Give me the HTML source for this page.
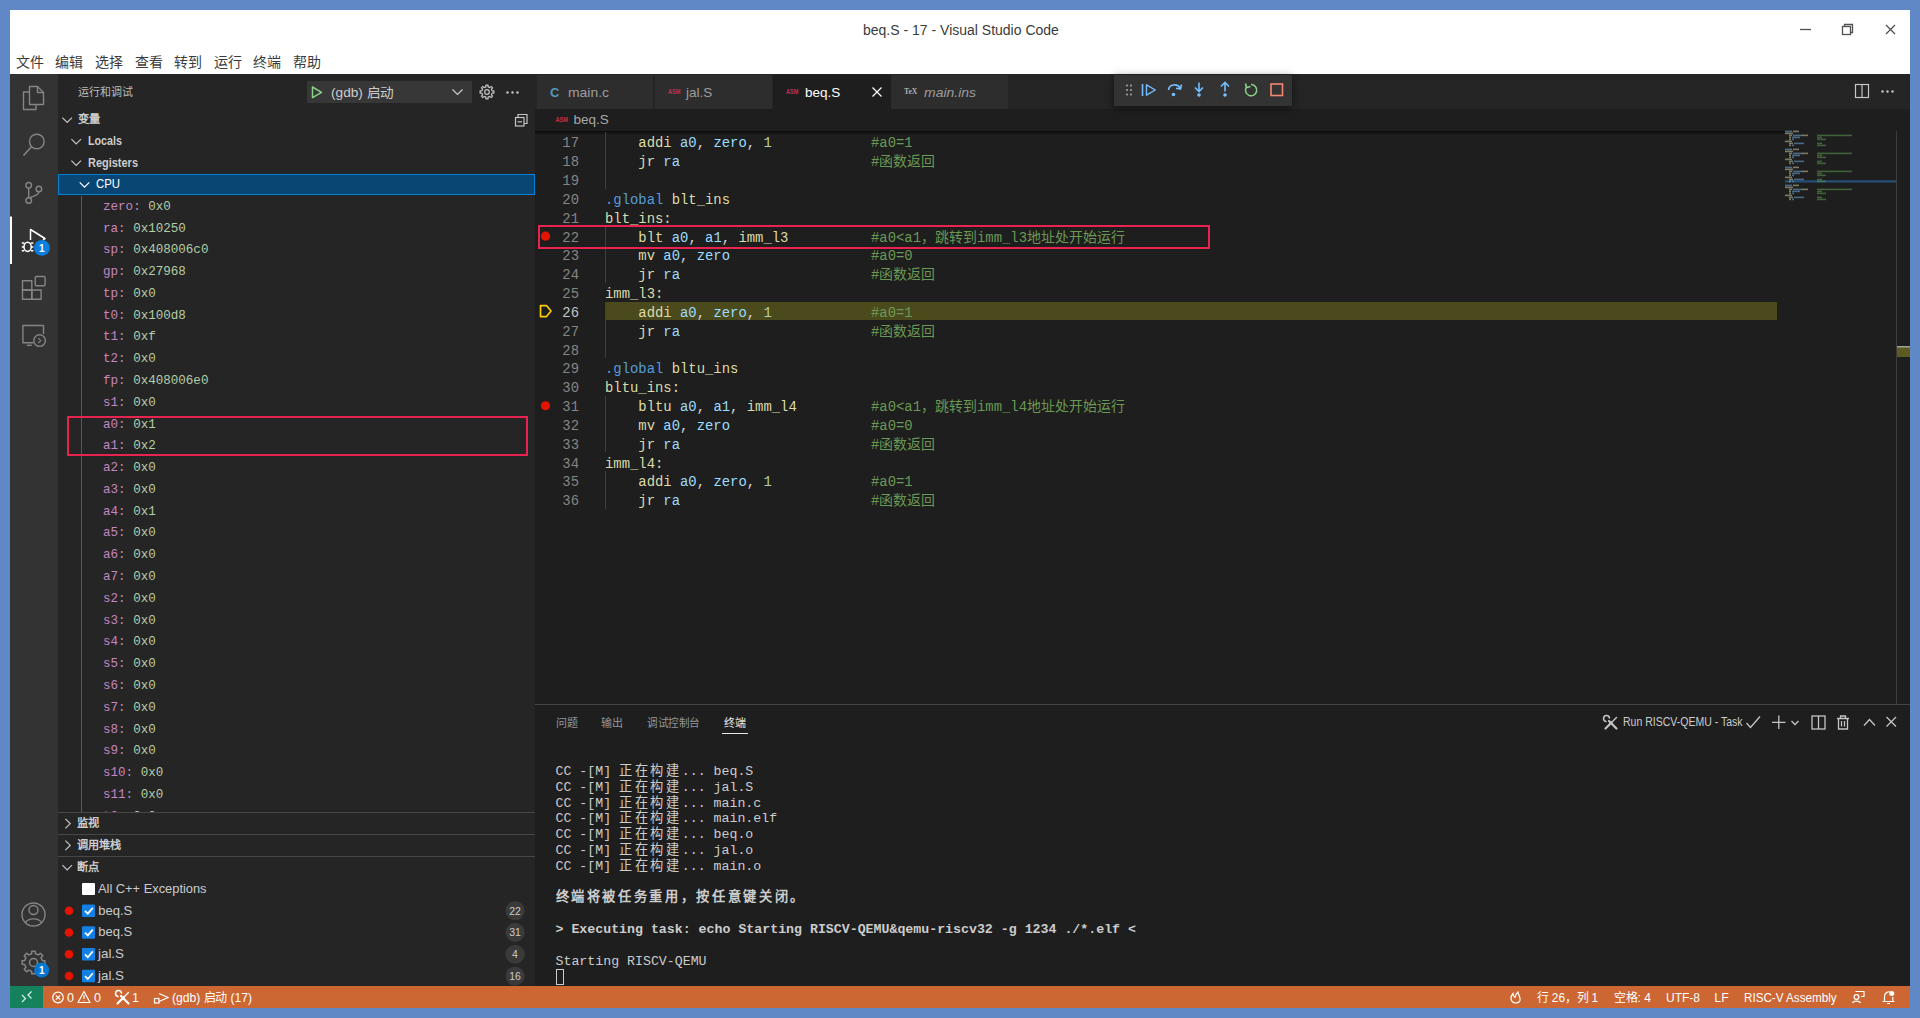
<!DOCTYPE html>
<html lang="zh-CN"><head><meta charset="utf-8">
<style>
*{box-sizing:border-box;margin:0;padding:0}
html,body{width:1920px;height:1018px;overflow:hidden;background:#6088c6}
body{position:relative;font-family:"Liberation Sans",sans-serif}
.a{position:absolute}
.t{position:absolute;white-space:pre}
svg{position:absolute;overflow:visible}
</style></head><body>

<div class="a" style="left:10px;top:10px;width:1900px;height:64px;background:#ffffff;"></div>
<div class="t" style="left:863px;top:20.00px;font-size:14px;color:#3b3b3b;line-height:20px;height:20px;">beq.S - 17 - Visual Studio Code</div>
<div class="t" style="left:15.5px;top:52.00px;font-size:14px;color:#3c3c3c;line-height:20px;height:20px;">文件</div>
<div class="t" style="left:55.3px;top:52.00px;font-size:14px;color:#3c3c3c;line-height:20px;height:20px;">编辑</div>
<div class="t" style="left:95.1px;top:52.00px;font-size:14px;color:#3c3c3c;line-height:20px;height:20px;">选择</div>
<div class="t" style="left:134.5px;top:52.00px;font-size:14px;color:#3c3c3c;line-height:20px;height:20px;">查看</div>
<div class="t" style="left:173.5px;top:52.00px;font-size:14px;color:#3c3c3c;line-height:20px;height:20px;">转到</div>
<div class="t" style="left:214.0px;top:52.00px;font-size:14px;color:#3c3c3c;line-height:20px;height:20px;">运行</div>
<div class="t" style="left:253.0px;top:52.00px;font-size:14px;color:#3c3c3c;line-height:20px;height:20px;">终端</div>
<div class="t" style="left:292.5px;top:52.00px;font-size:14px;color:#3c3c3c;line-height:20px;height:20px;">帮助</div>
<svg style="left:0px;top:0px" width="1920" height="1018" viewBox="0 0 1920 1018">
 <line x1="1800" y1="29.5" x2="1811" y2="29.5" stroke="#505050" stroke-width="1.3"/>
 <rect x="1842.5" y="26.5" width="8" height="8" fill="none" stroke="#505050" stroke-width="1.3"/>
 <path d="M1844.5 26.5 V24.5 H1852.5 V32.5 H1850.5" fill="none" stroke="#505050" stroke-width="1.3"/>
 <path d="M1886 25 L1895 34 M1895 25 L1886 34" stroke="#505050" stroke-width="1.3"/>
</svg>
<div class="a" style="left:10px;top:74px;width:48px;height:912px;background:#333333;"></div>
<div class="a" style="left:58px;top:74px;width:477px;height:912px;background:#252526;"></div>
<div class="a" style="left:535px;top:74px;width:1375px;height:912px;background:#1e1e1e;"></div>
<div class="a" style="left:535px;top:74px;width:1375px;height:34.5px;background:#252526;"></div>
<div class="a" style="left:10px;top:986px;width:1900px;height:22px;background:#cc6633;"></div>
<div class="a" style="left:10px;top:986px;width:33px;height:22px;background:#16825d;"></div>
<svg style="left:10px;top:74px" width="48" height="912" viewBox="10 74 48 912">
<g fill="none" stroke="#858585" stroke-width="1.4" stroke-linejoin="round">
 <path d="M29.5 86.5 H37.5 L43.5 92.5 V104.5 H29.5 Z"/>
 <path d="M37.5 86.5 V92.5 H43.5"/>
 <path d="M29.5 92 H23.5 V109.5 H36 V104.5"/>
 <circle cx="36.8" cy="141.5" r="7.3"/>
 <path d="M31.5 146.8 L23.5 155.5" stroke-width="1.6"/>
 <circle cx="28.7" cy="185.3" r="2.8"/>
 <circle cx="38.9" cy="189" r="2.8"/>
 <circle cx="28.7" cy="200.5" r="2.8"/>
 <path d="M28.7 188.1 V197.7 M38.9 191.8 C38.9 196 33 195.5 29.5 198"/>
 <rect x="22.5" y="280.8" width="9.3" height="9.2"/>
 <rect x="22.5" y="290" width="9.3" height="9.2"/>
 <rect x="31.8" y="290" width="9.3" height="9.2"/>
 <rect x="35.3" y="276.5" width="9.8" height="9.2" rx="1"/>
 <path d="M33.5 342.7 H22.9 V325.5 H43.5 V334"/>
 <path d="M26.8 345.3 H31.8"/>
 <circle cx="39.6" cy="340.6" r="5.8"/>
 <path d="M38.3 338.2 L40.8 340.6 L38.3 343" stroke-width="1.1"/>
 <circle cx="33.5" cy="914.5" r="11.5"/>
 <circle cx="33.5" cy="910" r="4.5"/>
 <path d="M25.5 923 C27.5 917.5 39.5 917.5 41.5 923"/>
</g>
<g fill="none" stroke="#ffffff" stroke-width="1.5" stroke-linejoin="round">
 <path d="M30.5 240 V229.5 L45 238.5 L43 239.8"/>
 <ellipse cx="27.6" cy="246.8" rx="3.6" ry="4.6"/>
 <path d="M21.8 243 H24.2 M21.8 247 H24 M21.8 250.8 H24.2 M31 243 H33.4 M31.2 247 H33.4 M31 250.8 H33.4"/>
</g>
<circle cx="41.9" cy="247.9" r="7.9" fill="#0a7fe0"/>
<text x="41.9" y="251.6" font-family="Liberation Sans" font-size="10" font-weight="bold" fill="#fff" text-anchor="middle">1</text>
<rect x="10" y="216.5" width="2" height="47.5" fill="#ffffff"/>
<g fill="none" stroke="#858585" stroke-width="1.5">
 <circle cx="33.5" cy="962.5" r="4"/>
 <path d="M42.29 960.57 L44.87 960.79 L44.87 964.21 L42.29 964.43 L41.08 967.35 L42.75 969.33 L40.33 971.75 L38.35 970.08 L35.43 971.29 L35.21 973.87 L31.79 973.87 L31.57 971.29 L28.65 970.08 L26.67 971.75 L24.25 969.33 L25.92 967.35 L24.71 964.43 L22.13 964.21 L22.13 960.79 L24.71 960.57 L25.92 957.65 L24.25 955.67 L26.67 953.25 L28.65 954.92 L31.57 953.71 L31.79 951.13 L35.21 951.13 L35.43 953.71 L38.35 954.92 L40.33 953.25 L42.75 955.67 L41.08 957.65 Z" stroke-linejoin="round"/>
</g>
<circle cx="41.7" cy="970" r="7.5" fill="#0078d4"/>
<text x="41.7" y="973.8" font-family="Liberation Sans" font-size="10" font-weight="bold" fill="#fff" text-anchor="middle">1</text>
</svg>
<div class="t" style="left:77.5px;top:82.00px;font-size:11px;color:#bbbbbb;line-height:20px;height:20px;">运行和调试</div>
<div class="a" style="left:306.5px;top:81px;width:165px;height:22px;background:#373737;"></div>
<svg style="left:300px;top:78px" width="235" height="60" viewBox="300 78 235 60">
<path d="M312.5 87 L321.5 92.3 L312.5 97.6 Z" fill="none" stroke="#89d185" stroke-width="1.5" stroke-linejoin="round"/>
<path d="M452.5 89.5 L457.5 94.5 L462.5 89.5" fill="none" stroke="#cccccc" stroke-width="1.2"/>
<g fill="none" stroke="#c5c5c5" stroke-width="1.2" stroke-linejoin="round">
 <path d="M492.08 90.89 L493.92 90.96 L493.92 93.04 L492.08 93.11 L491.38 94.80 L492.63 96.16 L491.16 97.63 L489.80 96.38 L488.11 97.08 L488.04 98.92 L485.96 98.92 L485.89 97.08 L484.20 96.38 L482.84 97.63 L481.37 96.16 L482.62 94.80 L481.92 93.11 L480.08 93.04 L480.08 90.96 L481.92 90.89 L482.62 89.20 L481.37 87.84 L482.84 86.37 L484.20 87.62 L485.89 86.92 L485.96 85.08 L488.04 85.08 L488.11 86.92 L489.80 87.62 L491.16 86.37 L492.63 87.84 L491.38 89.20 Z"/>
 <circle cx="487" cy="92" r="2.3"/>
</g>
<g fill="#c5c5c5"><circle cx="507.5" cy="92.5" r="1.2"/><circle cx="512.5" cy="92.5" r="1.2"/><circle cx="517.5" cy="92.5" r="1.2"/></g>
<g fill="none" stroke="#c5c5c5" stroke-width="1.2">
 <rect x="515.5" y="117.5" width="8.5" height="8.5"/>
 <path d="M518 117.5 V114.5 H527 V123.5 H524"/>
 <path d="M517.5 121.8 H522"/>
</g>
</svg>
<div class="t" style="left:330.5px;top:82.50px;font-size:13px;color:#cccccc;line-height:20px;height:20px;transform:scaleX(1.051);transform-origin:0 50%;">(gdb) 启动</div>
<div class="t" style="left:77.8px;top:109.20px;font-size:11px;color:#cccccc;line-height:20px;height:20px;font-weight:bold;transform:scaleX(1.023);transform-origin:0 50%;">变量</div>
<div class="t" style="left:87.8px;top:131.20px;font-size:12.3px;color:#cccccc;line-height:20px;height:20px;font-weight:bold;transform:scaleX(0.872);transform-origin:0 50%;">Locals</div>
<div class="t" style="left:87.8px;top:152.80px;font-size:12.3px;color:#cccccc;line-height:20px;height:20px;font-weight:bold;transform:scaleX(0.892);transform-origin:0 50%;">Registers</div>
<svg style="left:58px;top:100px" width="40" height="80" viewBox="58 100 40 80"><path d="M62.400000000000006 117.6 L67.2 122.4 L72.0 117.6" fill="none" stroke="#c5c5c5" stroke-width="1.2"/><path d="M71.4 139.1 L76.2 143.9 L81.0 139.1" fill="none" stroke="#c5c5c5" stroke-width="1.2"/><path d="M71.4 160.6 L76.2 165.4 L81.0 160.6" fill="none" stroke="#c5c5c5" stroke-width="1.2"/></svg>
<div class="a" style="left:58px;top:173.6px;width:477px;height:21.8px;background:#0a4674;border:1px solid #007fd4"></div>
<svg style="left:70px;top:170px" width="30" height="30" viewBox="70 170 30 30"><path d="M79.7 182.4 L84.5 187.20000000000002 L89.3 182.4" fill="none" stroke="#ffffff" stroke-width="1.2"/></svg>
<div class="t" style="left:95.5px;top:174.30px;font-size:12.3px;color:#ffffff;line-height:20px;height:20px;transform:scaleX(0.924);transform-origin:0 50%;">CPU</div>
<div class="a" style="left:58px;top:196px;width:477px;height:616.5px;overflow:hidden"><div class="t" style="left:45px;top:0.78px;line-height:20px;font-family:&quot;Liberation Mono&quot;,monospace;font-size:12.55px"><span style="color:#c586c0">zero</span><span style="color:#b48ab2">: </span><span style="color:#b5cea8">0x0</span></div><div class="t" style="left:45px;top:22.56px;line-height:20px;font-family:&quot;Liberation Mono&quot;,monospace;font-size:12.55px"><span style="color:#c586c0">ra</span><span style="color:#b48ab2">: </span><span style="color:#b5cea8">0x10250</span></div><div class="t" style="left:45px;top:44.34px;line-height:20px;font-family:&quot;Liberation Mono&quot;,monospace;font-size:12.55px"><span style="color:#c586c0">sp</span><span style="color:#b48ab2">: </span><span style="color:#b5cea8">0x408006c0</span></div><div class="t" style="left:45px;top:66.12px;line-height:20px;font-family:&quot;Liberation Mono&quot;,monospace;font-size:12.55px"><span style="color:#c586c0">gp</span><span style="color:#b48ab2">: </span><span style="color:#b5cea8">0x27968</span></div><div class="t" style="left:45px;top:87.90px;line-height:20px;font-family:&quot;Liberation Mono&quot;,monospace;font-size:12.55px"><span style="color:#c586c0">tp</span><span style="color:#b48ab2">: </span><span style="color:#b5cea8">0x0</span></div><div class="t" style="left:45px;top:109.68px;line-height:20px;font-family:&quot;Liberation Mono&quot;,monospace;font-size:12.55px"><span style="color:#c586c0">t0</span><span style="color:#b48ab2">: </span><span style="color:#b5cea8">0x100d8</span></div><div class="t" style="left:45px;top:131.46px;line-height:20px;font-family:&quot;Liberation Mono&quot;,monospace;font-size:12.55px"><span style="color:#c586c0">t1</span><span style="color:#b48ab2">: </span><span style="color:#b5cea8">0xf</span></div><div class="t" style="left:45px;top:153.24px;line-height:20px;font-family:&quot;Liberation Mono&quot;,monospace;font-size:12.55px"><span style="color:#c586c0">t2</span><span style="color:#b48ab2">: </span><span style="color:#b5cea8">0x0</span></div><div class="t" style="left:45px;top:175.02px;line-height:20px;font-family:&quot;Liberation Mono&quot;,monospace;font-size:12.55px"><span style="color:#c586c0">fp</span><span style="color:#b48ab2">: </span><span style="color:#b5cea8">0x408006e0</span></div><div class="t" style="left:45px;top:196.80px;line-height:20px;font-family:&quot;Liberation Mono&quot;,monospace;font-size:12.55px"><span style="color:#c586c0">s1</span><span style="color:#b48ab2">: </span><span style="color:#b5cea8">0x0</span></div><div class="t" style="left:45px;top:218.58px;line-height:20px;font-family:&quot;Liberation Mono&quot;,monospace;font-size:12.55px"><span style="color:#c586c0">a0</span><span style="color:#b48ab2">: </span><span style="color:#b5cea8">0x1</span></div><div class="t" style="left:45px;top:240.36px;line-height:20px;font-family:&quot;Liberation Mono&quot;,monospace;font-size:12.55px"><span style="color:#c586c0">a1</span><span style="color:#b48ab2">: </span><span style="color:#b5cea8">0x2</span></div><div class="t" style="left:45px;top:262.14px;line-height:20px;font-family:&quot;Liberation Mono&quot;,monospace;font-size:12.55px"><span style="color:#c586c0">a2</span><span style="color:#b48ab2">: </span><span style="color:#b5cea8">0x0</span></div><div class="t" style="left:45px;top:283.92px;line-height:20px;font-family:&quot;Liberation Mono&quot;,monospace;font-size:12.55px"><span style="color:#c586c0">a3</span><span style="color:#b48ab2">: </span><span style="color:#b5cea8">0x0</span></div><div class="t" style="left:45px;top:305.70px;line-height:20px;font-family:&quot;Liberation Mono&quot;,monospace;font-size:12.55px"><span style="color:#c586c0">a4</span><span style="color:#b48ab2">: </span><span style="color:#b5cea8">0x1</span></div><div class="t" style="left:45px;top:327.48px;line-height:20px;font-family:&quot;Liberation Mono&quot;,monospace;font-size:12.55px"><span style="color:#c586c0">a5</span><span style="color:#b48ab2">: </span><span style="color:#b5cea8">0x0</span></div><div class="t" style="left:45px;top:349.26px;line-height:20px;font-family:&quot;Liberation Mono&quot;,monospace;font-size:12.55px"><span style="color:#c586c0">a6</span><span style="color:#b48ab2">: </span><span style="color:#b5cea8">0x0</span></div><div class="t" style="left:45px;top:371.04px;line-height:20px;font-family:&quot;Liberation Mono&quot;,monospace;font-size:12.55px"><span style="color:#c586c0">a7</span><span style="color:#b48ab2">: </span><span style="color:#b5cea8">0x0</span></div><div class="t" style="left:45px;top:392.82px;line-height:20px;font-family:&quot;Liberation Mono&quot;,monospace;font-size:12.55px"><span style="color:#c586c0">s2</span><span style="color:#b48ab2">: </span><span style="color:#b5cea8">0x0</span></div><div class="t" style="left:45px;top:414.60px;line-height:20px;font-family:&quot;Liberation Mono&quot;,monospace;font-size:12.55px"><span style="color:#c586c0">s3</span><span style="color:#b48ab2">: </span><span style="color:#b5cea8">0x0</span></div><div class="t" style="left:45px;top:436.38px;line-height:20px;font-family:&quot;Liberation Mono&quot;,monospace;font-size:12.55px"><span style="color:#c586c0">s4</span><span style="color:#b48ab2">: </span><span style="color:#b5cea8">0x0</span></div><div class="t" style="left:45px;top:458.16px;line-height:20px;font-family:&quot;Liberation Mono&quot;,monospace;font-size:12.55px"><span style="color:#c586c0">s5</span><span style="color:#b48ab2">: </span><span style="color:#b5cea8">0x0</span></div><div class="t" style="left:45px;top:479.94px;line-height:20px;font-family:&quot;Liberation Mono&quot;,monospace;font-size:12.55px"><span style="color:#c586c0">s6</span><span style="color:#b48ab2">: </span><span style="color:#b5cea8">0x0</span></div><div class="t" style="left:45px;top:501.72px;line-height:20px;font-family:&quot;Liberation Mono&quot;,monospace;font-size:12.55px"><span style="color:#c586c0">s7</span><span style="color:#b48ab2">: </span><span style="color:#b5cea8">0x0</span></div><div class="t" style="left:45px;top:523.50px;line-height:20px;font-family:&quot;Liberation Mono&quot;,monospace;font-size:12.55px"><span style="color:#c586c0">s8</span><span style="color:#b48ab2">: </span><span style="color:#b5cea8">0x0</span></div><div class="t" style="left:45px;top:545.28px;line-height:20px;font-family:&quot;Liberation Mono&quot;,monospace;font-size:12.55px"><span style="color:#c586c0">s9</span><span style="color:#b48ab2">: </span><span style="color:#b5cea8">0x0</span></div><div class="t" style="left:45px;top:567.06px;line-height:20px;font-family:&quot;Liberation Mono&quot;,monospace;font-size:12.55px"><span style="color:#c586c0">s10</span><span style="color:#b48ab2">: </span><span style="color:#b5cea8">0x0</span></div><div class="t" style="left:45px;top:588.84px;line-height:20px;font-family:&quot;Liberation Mono&quot;,monospace;font-size:12.55px"><span style="color:#c586c0">s11</span><span style="color:#b48ab2">: </span><span style="color:#b5cea8">0x0</span></div><div class="t" style="left:45px;top:610.62px;line-height:20px;font-family:&quot;Liberation Mono&quot;,monospace;font-size:12.55px"><span style="color:#c586c0">t3</span><span style="color:#b48ab2">: </span><span style="color:#b5cea8">0x0</span></div><div class="a" style="left:23px;top:0;width:1px;height:620px;background:#585858"></div></div>
<div class="a" style="left:58px;top:812px;width:477px;height:1px;background:#474747;"></div>
<div class="a" style="left:58px;top:834px;width:477px;height:1px;background:#474747;"></div>
<div class="a" style="left:58px;top:856px;width:477px;height:1px;background:#474747;"></div>
<svg style="left:58px;top:810px" width="30" height="70" viewBox="58 810 30 70"><path d="M65.39999999999999 818.8000000000001 L70.2 823.6 L65.39999999999999 828.4" fill="none" stroke="#c5c5c5" stroke-width="1.2"/><path d="M65.39999999999999 840.6 L70.2 845.4 L65.39999999999999 850.1999999999999" fill="none" stroke="#c5c5c5" stroke-width="1.2"/><path d="M62.400000000000006 865.1 L67.2 869.9 L72.0 865.1" fill="none" stroke="#c5c5c5" stroke-width="1.2"/></svg>
<div class="t" style="left:76.7px;top:813.40px;font-size:11px;color:#cccccc;line-height:20px;height:20px;font-weight:bold;transform:scaleX(1.023);transform-origin:0 50%;">监视</div>
<div class="t" style="left:76.7px;top:835.20px;font-size:11px;color:#cccccc;line-height:20px;height:20px;font-weight:bold;transform:scaleX(1.011);transform-origin:0 50%;">调用堆栈</div>
<div class="t" style="left:76.7px;top:857.00px;font-size:11px;color:#cccccc;line-height:20px;height:20px;font-weight:bold;transform:scaleX(1.023);transform-origin:0 50%;">断点</div>
<div class="a" style="left:82px;top:882.5px;width:13px;height:12.3px;background:#ffffff;border-radius:1px"></div>
<div class="t" style="left:98.3px;top:878.90px;font-size:13px;color:#cccccc;line-height:20px;height:20px;transform:scaleX(0.988);transform-origin:0 50%;">All C++ Exceptions</div>
<div class="t" style="left:98.3px;top:900.68px;font-size:13px;color:#cccccc;line-height:20px;height:20px;">beq.S</div>
<div class="t" style="left:98.3px;top:922.46px;font-size:13px;color:#cccccc;line-height:20px;height:20px;">beq.S</div>
<div class="t" style="left:98.3px;top:944.24px;font-size:13px;color:#cccccc;line-height:20px;height:20px;transform:scaleX(1.028);transform-origin:0 50%;">jal.S</div>
<div class="t" style="left:98.3px;top:966.02px;font-size:13px;color:#cccccc;line-height:20px;height:20px;transform:scaleX(1.028);transform-origin:0 50%;">jal.S</div>
<svg style="left:58px;top:890px" width="477" height="96" viewBox="58 890 477 96"><circle cx="69" cy="910.68" r="4.3" fill="#e51400"/><rect x="82" y="904.48" width="13" height="12.4" rx="1" fill="#1380e5"/><path d="M85 910.88 L87.8 913.68 L92.8 907.88" fill="none" stroke="#ffffff" stroke-width="1.8"/><circle cx="515.1" cy="910.68" r="9.6" fill="#3a3a3a"/><circle cx="69" cy="932.46" r="4.3" fill="#e51400"/><rect x="82" y="926.26" width="13" height="12.4" rx="1" fill="#1380e5"/><path d="M85 932.66 L87.8 935.46 L92.8 929.66" fill="none" stroke="#ffffff" stroke-width="1.8"/><circle cx="515.1" cy="932.46" r="9.6" fill="#3a3a3a"/><circle cx="69" cy="954.24" r="4.3" fill="#e51400"/><rect x="82" y="948.04" width="13" height="12.4" rx="1" fill="#1380e5"/><path d="M85 954.44 L87.8 957.24 L92.8 951.44" fill="none" stroke="#ffffff" stroke-width="1.8"/><circle cx="515.1" cy="954.24" r="9.6" fill="#3a3a3a"/><circle cx="69" cy="976.02" r="4.3" fill="#e51400"/><rect x="82" y="969.82" width="13" height="12.4" rx="1" fill="#1380e5"/><path d="M85 976.22 L87.8 979.02 L92.8 973.22" fill="none" stroke="#ffffff" stroke-width="1.8"/><circle cx="515.1" cy="976.02" r="9.6" fill="#3a3a3a"/></svg>
<div class="t" style="left:495px;width:40px;text-align:center;top:900.68px;line-height:20px;font-size:10.5px;color:#cccccc">22</div>
<div class="t" style="left:495px;width:40px;text-align:center;top:922.46px;line-height:20px;font-size:10.5px;color:#cccccc">31</div>
<div class="t" style="left:495px;width:40px;text-align:center;top:944.24px;line-height:20px;font-size:10.5px;color:#cccccc">4</div>
<div class="t" style="left:495px;width:40px;text-align:center;top:966.02px;line-height:20px;font-size:10.5px;color:#cccccc">16</div>
<div class="a" style="left:537px;top:74.5px;width:116px;height:34px;background:#2d2d2d;"></div>
<div class="a" style="left:655px;top:74.5px;width:117px;height:34px;background:#2d2d2d;"></div>
<div class="a" style="left:773px;top:74.5px;width:118px;height:34px;background:#1e1e1e;"></div>
<div class="a" style="left:891px;top:74.5px;width:117px;height:34px;background:#2d2d2d;"></div>
<svg style="left:535px;top:74px" width="500" height="40" viewBox="535 74 500 40">
<text x="550" y="96.5" font-family="Liberation Sans" font-size="13" font-weight="bold" fill="#519aba">C</text>
<text x="668" y="94.2" font-family="Liberation Sans" font-size="7" font-weight="bold" fill="#c7304a" transform="translate(668 0) scale(0.8 1) translate(-668 0)">ASM</text>
<text x="786" y="94.2" font-family="Liberation Sans" font-size="7" font-weight="bold" fill="#c7304a" transform="translate(786 0) scale(0.8 1) translate(-786 0)">ASM</text>
<path d="M872.5 87.5 L881.5 96.5 M881.5 87.5 L872.5 96.5" stroke="#ffffff" stroke-width="1.2"/>
<text x="904" y="94.5" font-family="Liberation Serif" font-size="9" font-weight="bold" fill="#b0b0b0" transform="translate(904 0) scale(0.85 1) translate(-904 0)">TeX</text>
</svg>
<div class="t" style="left:567.5px;top:82.50px;font-size:13.5px;color:#9d9d9d;line-height:20px;height:20px;transform:scaleX(1.031);transform-origin:0 50%;">main.c</div>
<div class="t" style="left:686px;top:82.50px;font-size:13.5px;color:#9d9d9d;line-height:20px;height:20px;">jal.S</div>
<div class="t" style="left:805px;top:82.50px;font-size:13.5px;color:#ffffff;line-height:20px;height:20px;">beq.S</div>
<div class="t" style="left:924.4px;top:82.50px;font-size:13.5px;color:#9d9d9d;line-height:20px;height:20px;font-style:italic;transform:scaleX(1.034);transform-origin:0 50%;">main.ins</div>
<div class="a" style="left:1114px;top:74.5px;width:177.5px;height:31px;background:#333333;box-shadow:0 2px 8px rgba(0,0,0,0.55)"></div>
<svg style="left:1100px;top:74px" width="810" height="40" viewBox="1100 74 810 40">
<g fill="#a0a0a0">
 <circle cx="1127" cy="85.5" r="1.1"/><circle cx="1131" cy="85.5" r="1.1"/>
 <circle cx="1127" cy="90" r="1.1"/><circle cx="1131" cy="90" r="1.1"/>
 <circle cx="1127" cy="94.5" r="1.1"/><circle cx="1131" cy="94.5" r="1.1"/>
</g>
<path d="M1142.5 84 V96" stroke="#75beff" stroke-width="1.6"/>
<path d="M1146.5 84.8 L1155.3 90 L1146.5 95.2 Z" fill="none" stroke="#75beff" stroke-width="1.4" stroke-linejoin="round"/>
<path d="M1168.5 90 C1169 84 1178 83 1180 88.5" fill="none" stroke="#75beff" stroke-width="1.6"/>
<path d="M1176 88.3 L1180.5 89 L1181.5 84.5" fill="none" stroke="#75beff" stroke-width="1.6"/>
<circle cx="1173.5" cy="94.5" r="1.8" fill="#75beff"/>
<path d="M1199 82.5 V91 M1195 87.5 L1199 91.5 L1203 87.5" fill="none" stroke="#75beff" stroke-width="1.6"/>
<circle cx="1199" cy="95" r="1.8" fill="#75beff"/>
<path d="M1225 91.5 V83 M1221 86.5 L1225 82.5 L1229 86.5" fill="none" stroke="#75beff" stroke-width="1.6"/>
<circle cx="1225" cy="95" r="1.8" fill="#75beff"/>
<path d="M1246.5 87 A5.6 5.6 0 1 0 1251 84.6" fill="none" stroke="#89d185" stroke-width="1.5"/>
<path d="M1245.5 83.5 L1246.5 87.5 L1250.5 86.5" fill="none" stroke="#89d185" stroke-width="1.6"/>
<rect x="1271" y="84" width="11.5" height="11.5" fill="none" stroke="#f48771" stroke-width="1.6"/>
<g fill="none" stroke="#c5c5c5" stroke-width="1.2">
 <rect x="1855.5" y="84.5" width="13" height="13"/>
 <path d="M1862 84.5 V97.5"/>
</g>
<g fill="#c5c5c5"><circle cx="1882.5" cy="91.5" r="1.2"/><circle cx="1887.5" cy="91.5" r="1.2"/><circle cx="1892.5" cy="91.5" r="1.2"/></g>
</svg>
<svg style="left:535px;top:108px" width="60" height="24" viewBox="535 108 60 24"><text x="555.5" y="122.3" font-family="Liberation Sans" font-size="7" font-weight="bold" fill="#c7304a" transform="translate(555.5 0) scale(0.8 1) translate(-555.5 0)">ASM</text></svg>
<div class="t" style="left:573.5px;top:109.70px;font-size:13.5px;color:#a9a9a9;line-height:20px;height:20px;">beq.S</div>
<div class="a" style="left:535px;top:131px;width:1250px;height:4px;background:linear-gradient(#000000aa,#00000000)"></div>
<div class="a" style="left:605px;top:301.64px;width:1172px;height:18.84px;background:#4b4a1c;"></div>
<div class="a" style="left:605px;top:132.08px;width:1px;height:56.519999999999996px;background:#404040;"></div>
<div class="a" style="left:605px;top:226.28px;width:1px;height:56.519999999999996px;background:#404040;"></div>
<div class="a" style="left:605px;top:301.64px;width:1px;height:56.519999999999996px;background:#404040;"></div>
<div class="a" style="left:605px;top:395.84px;width:1px;height:56.519999999999996px;background:#404040;"></div>
<div class="a" style="left:605px;top:471.2px;width:1px;height:37.68px;background:#404040;"></div>
<div class="t" style="left:540px;width:39px;text-align:right;top:133.30px;line-height:20px;font-family:&quot;Liberation Mono&quot;,monospace;font-size:13.9px;color:#858585">17</div>
<div class="t" style="left:540px;width:39px;text-align:right;top:152.14px;line-height:20px;font-family:&quot;Liberation Mono&quot;,monospace;font-size:13.9px;color:#858585">18</div>
<div class="t" style="left:540px;width:39px;text-align:right;top:170.98px;line-height:20px;font-family:&quot;Liberation Mono&quot;,monospace;font-size:13.9px;color:#858585">19</div>
<div class="t" style="left:540px;width:39px;text-align:right;top:189.82px;line-height:20px;font-family:&quot;Liberation Mono&quot;,monospace;font-size:13.9px;color:#858585">20</div>
<div class="t" style="left:540px;width:39px;text-align:right;top:208.66px;line-height:20px;font-family:&quot;Liberation Mono&quot;,monospace;font-size:13.9px;color:#858585">21</div>
<div class="t" style="left:540px;width:39px;text-align:right;top:227.50px;line-height:20px;font-family:&quot;Liberation Mono&quot;,monospace;font-size:13.9px;color:#858585">22</div>
<div class="t" style="left:540px;width:39px;text-align:right;top:246.34px;line-height:20px;font-family:&quot;Liberation Mono&quot;,monospace;font-size:13.9px;color:#858585">23</div>
<div class="t" style="left:540px;width:39px;text-align:right;top:265.18px;line-height:20px;font-family:&quot;Liberation Mono&quot;,monospace;font-size:13.9px;color:#858585">24</div>
<div class="t" style="left:540px;width:39px;text-align:right;top:284.02px;line-height:20px;font-family:&quot;Liberation Mono&quot;,monospace;font-size:13.9px;color:#858585">25</div>
<div class="t" style="left:540px;width:39px;text-align:right;top:302.86px;line-height:20px;font-family:&quot;Liberation Mono&quot;,monospace;font-size:13.9px;color:#c6c6c6">26</div>
<div class="t" style="left:540px;width:39px;text-align:right;top:321.70px;line-height:20px;font-family:&quot;Liberation Mono&quot;,monospace;font-size:13.9px;color:#858585">27</div>
<div class="t" style="left:540px;width:39px;text-align:right;top:340.54px;line-height:20px;font-family:&quot;Liberation Mono&quot;,monospace;font-size:13.9px;color:#858585">28</div>
<div class="t" style="left:540px;width:39px;text-align:right;top:359.38px;line-height:20px;font-family:&quot;Liberation Mono&quot;,monospace;font-size:13.9px;color:#858585">29</div>
<div class="t" style="left:540px;width:39px;text-align:right;top:378.22px;line-height:20px;font-family:&quot;Liberation Mono&quot;,monospace;font-size:13.9px;color:#858585">30</div>
<div class="t" style="left:540px;width:39px;text-align:right;top:397.06px;line-height:20px;font-family:&quot;Liberation Mono&quot;,monospace;font-size:13.9px;color:#858585">31</div>
<div class="t" style="left:540px;width:39px;text-align:right;top:415.90px;line-height:20px;font-family:&quot;Liberation Mono&quot;,monospace;font-size:13.9px;color:#858585">32</div>
<div class="t" style="left:540px;width:39px;text-align:right;top:434.74px;line-height:20px;font-family:&quot;Liberation Mono&quot;,monospace;font-size:13.9px;color:#858585">33</div>
<div class="t" style="left:540px;width:39px;text-align:right;top:453.58px;line-height:20px;font-family:&quot;Liberation Mono&quot;,monospace;font-size:13.9px;color:#858585">34</div>
<div class="t" style="left:540px;width:39px;text-align:right;top:472.42px;line-height:20px;font-family:&quot;Liberation Mono&quot;,monospace;font-size:13.9px;color:#858585">35</div>
<div class="t" style="left:540px;width:39px;text-align:right;top:491.26px;line-height:20px;font-family:&quot;Liberation Mono&quot;,monospace;font-size:13.9px;color:#858585">36</div>
<div class="t" style="left:605px;top:133.30px;line-height:20px;font-family:&quot;Liberation Mono&quot;,monospace;font-size:13.9px"><span style="color:#d4d4d4">    </span><span style="color:#dcdcaa">addi</span><span style="color:#d4d4d4"> </span><span style="color:#9cdcfe">a0</span><span style="color:#d4d4d4">, </span><span style="color:#9cdcfe">zero</span><span style="color:#d4d4d4">, </span><span style="color:#b5cea8">1</span></div>
<div class="t" style="left:605px;top:152.14px;line-height:20px;font-family:&quot;Liberation Mono&quot;,monospace;font-size:13.9px"><span style="color:#d4d4d4">    </span><span style="color:#dcdcaa">jr</span><span style="color:#d4d4d4"> </span><span style="color:#9cdcfe">ra</span></div>
<div class="t" style="left:605px;top:189.82px;line-height:20px;font-family:&quot;Liberation Mono&quot;,monospace;font-size:13.9px"><span style="color:#569cd6">.global</span><span style="color:#dcdcaa"> blt_ins</span></div>
<div class="t" style="left:605px;top:208.66px;line-height:20px;font-family:&quot;Liberation Mono&quot;,monospace;font-size:13.9px"><span style="color:#dcdcaa">blt_ins:</span></div>
<div class="t" style="left:605px;top:227.50px;line-height:20px;font-family:&quot;Liberation Mono&quot;,monospace;font-size:13.9px"><span style="color:#d4d4d4">    </span><span style="color:#dcdcaa">blt</span><span style="color:#d4d4d4"> </span><span style="color:#9cdcfe">a0</span><span style="color:#d4d4d4">, </span><span style="color:#9cdcfe">a1</span><span style="color:#d4d4d4">, </span><span style="color:#dcdcaa">imm_l3</span></div>
<div class="t" style="left:605px;top:246.34px;line-height:20px;font-family:&quot;Liberation Mono&quot;,monospace;font-size:13.9px"><span style="color:#d4d4d4">    </span><span style="color:#dcdcaa">mv</span><span style="color:#d4d4d4"> </span><span style="color:#9cdcfe">a0</span><span style="color:#d4d4d4">, </span><span style="color:#9cdcfe">zero</span></div>
<div class="t" style="left:605px;top:265.18px;line-height:20px;font-family:&quot;Liberation Mono&quot;,monospace;font-size:13.9px"><span style="color:#d4d4d4">    </span><span style="color:#dcdcaa">jr</span><span style="color:#d4d4d4"> </span><span style="color:#9cdcfe">ra</span></div>
<div class="t" style="left:605px;top:284.02px;line-height:20px;font-family:&quot;Liberation Mono&quot;,monospace;font-size:13.9px"><span style="color:#dcdcaa">imm_l3:</span></div>
<div class="t" style="left:605px;top:302.86px;line-height:20px;font-family:&quot;Liberation Mono&quot;,monospace;font-size:13.9px"><span style="color:#d4d4d4">    </span><span style="color:#dcdcaa">addi</span><span style="color:#d4d4d4"> </span><span style="color:#9cdcfe">a0</span><span style="color:#d4d4d4">, </span><span style="color:#9cdcfe">zero</span><span style="color:#d4d4d4">, </span><span style="color:#b5cea8">1</span></div>
<div class="t" style="left:605px;top:321.70px;line-height:20px;font-family:&quot;Liberation Mono&quot;,monospace;font-size:13.9px"><span style="color:#d4d4d4">    </span><span style="color:#dcdcaa">jr</span><span style="color:#d4d4d4"> </span><span style="color:#9cdcfe">ra</span></div>
<div class="t" style="left:605px;top:359.38px;line-height:20px;font-family:&quot;Liberation Mono&quot;,monospace;font-size:13.9px"><span style="color:#569cd6">.global</span><span style="color:#dcdcaa"> bltu_ins</span></div>
<div class="t" style="left:605px;top:378.22px;line-height:20px;font-family:&quot;Liberation Mono&quot;,monospace;font-size:13.9px"><span style="color:#dcdcaa">bltu_ins:</span></div>
<div class="t" style="left:605px;top:397.06px;line-height:20px;font-family:&quot;Liberation Mono&quot;,monospace;font-size:13.9px"><span style="color:#d4d4d4">    </span><span style="color:#dcdcaa">bltu</span><span style="color:#d4d4d4"> </span><span style="color:#9cdcfe">a0</span><span style="color:#d4d4d4">, </span><span style="color:#9cdcfe">a1</span><span style="color:#d4d4d4">, </span><span style="color:#dcdcaa">imm_l4</span></div>
<div class="t" style="left:605px;top:415.90px;line-height:20px;font-family:&quot;Liberation Mono&quot;,monospace;font-size:13.9px"><span style="color:#d4d4d4">    </span><span style="color:#dcdcaa">mv</span><span style="color:#d4d4d4"> </span><span style="color:#9cdcfe">a0</span><span style="color:#d4d4d4">, </span><span style="color:#9cdcfe">zero</span></div>
<div class="t" style="left:605px;top:434.74px;line-height:20px;font-family:&quot;Liberation Mono&quot;,monospace;font-size:13.9px"><span style="color:#d4d4d4">    </span><span style="color:#dcdcaa">jr</span><span style="color:#d4d4d4"> </span><span style="color:#9cdcfe">ra</span></div>
<div class="t" style="left:605px;top:453.58px;line-height:20px;font-family:&quot;Liberation Mono&quot;,monospace;font-size:13.9px"><span style="color:#dcdcaa">imm_l4:</span></div>
<div class="t" style="left:605px;top:472.42px;line-height:20px;font-family:&quot;Liberation Mono&quot;,monospace;font-size:13.9px"><span style="color:#d4d4d4">    </span><span style="color:#dcdcaa">addi</span><span style="color:#d4d4d4"> </span><span style="color:#9cdcfe">a0</span><span style="color:#d4d4d4">, </span><span style="color:#9cdcfe">zero</span><span style="color:#d4d4d4">, </span><span style="color:#b5cea8">1</span></div>
<div class="t" style="left:605px;top:491.26px;line-height:20px;font-family:&quot;Liberation Mono&quot;,monospace;font-size:13.9px"><span style="color:#d4d4d4">    </span><span style="color:#dcdcaa">jr</span><span style="color:#d4d4d4"> </span><span style="color:#9cdcfe">ra</span></div>
<div class="t" style="left:871px;top:133.30px;line-height:20px;font-family:&quot;Liberation Mono&quot;,monospace;font-size:13.9px;color:#6a9955">#a0=1</div>
<div class="t" style="left:871px;top:152.14px;line-height:20px;font-family:&quot;Liberation Mono&quot;,monospace;font-size:13.9px;color:#6a9955">#函数返回</div>
<div class="t" style="left:871px;top:227.50px;line-height:20px;font-family:&quot;Liberation Mono&quot;,monospace;font-size:13.9px;color:#6a9955">#a0&lt;a1，跳转到imm_l3地址处开始运行</div>
<div class="t" style="left:871px;top:246.34px;line-height:20px;font-family:&quot;Liberation Mono&quot;,monospace;font-size:13.9px;color:#6a9955">#a0=0</div>
<div class="t" style="left:871px;top:265.18px;line-height:20px;font-family:&quot;Liberation Mono&quot;,monospace;font-size:13.9px;color:#6a9955">#函数返回</div>
<div class="t" style="left:871px;top:302.86px;line-height:20px;font-family:&quot;Liberation Mono&quot;,monospace;font-size:13.9px;color:#6a9955">#a0=1</div>
<div class="t" style="left:871px;top:321.70px;line-height:20px;font-family:&quot;Liberation Mono&quot;,monospace;font-size:13.9px;color:#6a9955">#函数返回</div>
<div class="t" style="left:871px;top:397.06px;line-height:20px;font-family:&quot;Liberation Mono&quot;,monospace;font-size:13.9px;color:#6a9955">#a0&lt;a1，跳转到imm_l4地址处开始运行</div>
<div class="t" style="left:871px;top:415.90px;line-height:20px;font-family:&quot;Liberation Mono&quot;,monospace;font-size:13.9px;color:#6a9955">#a0=0</div>
<div class="t" style="left:871px;top:434.74px;line-height:20px;font-family:&quot;Liberation Mono&quot;,monospace;font-size:13.9px;color:#6a9955">#函数返回</div>
<div class="t" style="left:871px;top:472.42px;line-height:20px;font-family:&quot;Liberation Mono&quot;,monospace;font-size:13.9px;color:#6a9955">#a0=1</div>
<div class="t" style="left:871px;top:491.26px;line-height:20px;font-family:&quot;Liberation Mono&quot;,monospace;font-size:13.9px;color:#6a9955">#函数返回</div>
<svg style="left:535px;top:130px" width="70" height="400" viewBox="535 130 70 400">
<circle cx="545.5" cy="236.20" r="4.6" fill="#e51400"/>
<circle cx="545.5" cy="405.76" r="4.6" fill="#e51400"/>
<path d="M540.5 305.56 H546.5 L551 311.06 L546.5 316.56 H540.5 Z" fill="none" stroke="#ffcc00" stroke-width="1.7" stroke-linejoin="round"/>
</svg>
<svg style="left:1780px;top:128px" width="130" height="580" viewBox="1780 128 130 580"><rect x="1785" y="180.3" width="111" height="2.2" fill="#264f78"/><rect x="1785" y="130.6" width="7" height="1.6" fill="#6fa8d8" opacity="0.55"/><rect x="1793" y="130.6" width="6" height="1.6" fill="#c8c8a0" opacity="0.55"/><rect x="1785" y="132.6" width="8" height="1.6" fill="#c8c8a0" opacity="0.55"/><rect x="1789" y="134.6" width="3" height="1.6" fill="#c8c8a0" opacity="0.55"/><rect x="1793" y="134.6" width="8" height="1.6" fill="#6fa8d8" opacity="0.55"/><rect x="1801" y="134.6" width="7" height="1.6" fill="#c8c8a0" opacity="0.55"/><rect x="1817" y="134.6" width="35" height="1.6" fill="#5f9a4f" opacity="0.55"/><rect x="1789" y="136.6" width="2" height="1.6" fill="#c8c8a0" opacity="0.55"/><rect x="1792" y="136.6" width="8" height="1.6" fill="#6fa8d8" opacity="0.55"/><rect x="1817" y="136.6" width="5" height="1.6" fill="#5f9a4f" opacity="0.55"/><rect x="1789" y="138.6" width="2" height="1.6" fill="#c8c8a0" opacity="0.55"/><rect x="1792" y="138.6" width="2" height="1.6" fill="#6fa8d8" opacity="0.55"/><rect x="1817" y="138.6" width="9" height="1.6" fill="#5f9a4f" opacity="0.55"/><rect x="1785" y="140.6" width="7" height="1.6" fill="#c8c8a0" opacity="0.55"/><rect x="1789" y="142.6" width="4" height="1.6" fill="#c8c8a0" opacity="0.55"/><rect x="1794" y="142.6" width="10" height="1.6" fill="#6fa8d8" opacity="0.55"/><rect x="1817" y="142.6" width="5" height="1.6" fill="#5f9a4f" opacity="0.55"/><rect x="1789" y="144.6" width="2" height="1.6" fill="#c8c8a0" opacity="0.55"/><rect x="1792" y="144.6" width="2" height="1.6" fill="#6fa8d8" opacity="0.55"/><rect x="1817" y="144.6" width="9" height="1.6" fill="#5f9a4f" opacity="0.55"/><rect x="1785" y="148.6" width="7" height="1.6" fill="#6fa8d8" opacity="0.55"/><rect x="1793" y="148.6" width="6" height="1.6" fill="#c8c8a0" opacity="0.55"/><rect x="1785" y="150.6" width="8" height="1.6" fill="#c8c8a0" opacity="0.55"/><rect x="1789" y="152.6" width="3" height="1.6" fill="#c8c8a0" opacity="0.55"/><rect x="1793" y="152.6" width="8" height="1.6" fill="#6fa8d8" opacity="0.55"/><rect x="1801" y="152.6" width="7" height="1.6" fill="#c8c8a0" opacity="0.55"/><rect x="1817" y="152.6" width="35" height="1.6" fill="#5f9a4f" opacity="0.55"/><rect x="1789" y="154.6" width="2" height="1.6" fill="#c8c8a0" opacity="0.55"/><rect x="1792" y="154.6" width="8" height="1.6" fill="#6fa8d8" opacity="0.55"/><rect x="1817" y="154.6" width="5" height="1.6" fill="#5f9a4f" opacity="0.55"/><rect x="1789" y="156.6" width="2" height="1.6" fill="#c8c8a0" opacity="0.55"/><rect x="1792" y="156.6" width="2" height="1.6" fill="#6fa8d8" opacity="0.55"/><rect x="1817" y="156.6" width="9" height="1.6" fill="#5f9a4f" opacity="0.55"/><rect x="1785" y="158.6" width="7" height="1.6" fill="#c8c8a0" opacity="0.55"/><rect x="1789" y="160.6" width="4" height="1.6" fill="#c8c8a0" opacity="0.55"/><rect x="1794" y="160.6" width="10" height="1.6" fill="#6fa8d8" opacity="0.55"/><rect x="1817" y="160.6" width="5" height="1.6" fill="#5f9a4f" opacity="0.55"/><rect x="1789" y="162.6" width="2" height="1.6" fill="#c8c8a0" opacity="0.55"/><rect x="1792" y="162.6" width="2" height="1.6" fill="#6fa8d8" opacity="0.55"/><rect x="1817" y="162.6" width="9" height="1.6" fill="#5f9a4f" opacity="0.55"/><rect x="1785" y="166.6" width="7" height="1.6" fill="#6fa8d8" opacity="0.55"/><rect x="1793" y="166.6" width="6" height="1.6" fill="#c8c8a0" opacity="0.55"/><rect x="1785" y="168.6" width="8" height="1.6" fill="#c8c8a0" opacity="0.55"/><rect x="1789" y="170.6" width="3" height="1.6" fill="#c8c8a0" opacity="0.55"/><rect x="1793" y="170.6" width="8" height="1.6" fill="#6fa8d8" opacity="0.55"/><rect x="1801" y="170.6" width="7" height="1.6" fill="#c8c8a0" opacity="0.55"/><rect x="1817" y="170.6" width="35" height="1.6" fill="#5f9a4f" opacity="0.55"/><rect x="1789" y="172.6" width="2" height="1.6" fill="#c8c8a0" opacity="0.55"/><rect x="1792" y="172.6" width="8" height="1.6" fill="#6fa8d8" opacity="0.55"/><rect x="1817" y="172.6" width="5" height="1.6" fill="#5f9a4f" opacity="0.55"/><rect x="1789" y="174.6" width="2" height="1.6" fill="#c8c8a0" opacity="0.55"/><rect x="1792" y="174.6" width="2" height="1.6" fill="#6fa8d8" opacity="0.55"/><rect x="1817" y="174.6" width="9" height="1.6" fill="#5f9a4f" opacity="0.55"/><rect x="1785" y="176.6" width="7" height="1.6" fill="#c8c8a0" opacity="0.55"/><rect x="1789" y="178.6" width="4" height="1.6" fill="#c8c8a0" opacity="0.55"/><rect x="1794" y="178.6" width="10" height="1.6" fill="#6fa8d8" opacity="0.55"/><rect x="1817" y="178.6" width="5" height="1.6" fill="#5f9a4f" opacity="0.55"/><rect x="1789" y="180.6" width="2" height="1.6" fill="#c8c8a0" opacity="0.55"/><rect x="1792" y="180.6" width="2" height="1.6" fill="#6fa8d8" opacity="0.55"/><rect x="1817" y="180.6" width="9" height="1.6" fill="#5f9a4f" opacity="0.55"/><rect x="1785" y="184.6" width="7" height="1.6" fill="#6fa8d8" opacity="0.55"/><rect x="1793" y="184.6" width="6" height="1.6" fill="#c8c8a0" opacity="0.55"/><rect x="1785" y="186.6" width="8" height="1.6" fill="#c8c8a0" opacity="0.55"/><rect x="1789" y="188.6" width="3" height="1.6" fill="#c8c8a0" opacity="0.55"/><rect x="1793" y="188.6" width="8" height="1.6" fill="#6fa8d8" opacity="0.55"/><rect x="1801" y="188.6" width="7" height="1.6" fill="#c8c8a0" opacity="0.55"/><rect x="1817" y="188.6" width="35" height="1.6" fill="#5f9a4f" opacity="0.55"/><rect x="1789" y="190.6" width="2" height="1.6" fill="#c8c8a0" opacity="0.55"/><rect x="1792" y="190.6" width="8" height="1.6" fill="#6fa8d8" opacity="0.55"/><rect x="1817" y="190.6" width="5" height="1.6" fill="#5f9a4f" opacity="0.55"/><rect x="1789" y="192.6" width="2" height="1.6" fill="#c8c8a0" opacity="0.55"/><rect x="1792" y="192.6" width="2" height="1.6" fill="#6fa8d8" opacity="0.55"/><rect x="1817" y="192.6" width="9" height="1.6" fill="#5f9a4f" opacity="0.55"/><rect x="1785" y="194.6" width="7" height="1.6" fill="#c8c8a0" opacity="0.55"/><rect x="1789" y="196.6" width="4" height="1.6" fill="#c8c8a0" opacity="0.55"/><rect x="1794" y="196.6" width="10" height="1.6" fill="#6fa8d8" opacity="0.55"/><rect x="1817" y="196.6" width="5" height="1.6" fill="#5f9a4f" opacity="0.55"/><rect x="1789" y="198.6" width="2" height="1.6" fill="#c8c8a0" opacity="0.55"/><rect x="1792" y="198.6" width="2" height="1.6" fill="#6fa8d8" opacity="0.55"/><rect x="1817" y="198.6" width="9" height="1.6" fill="#5f9a4f" opacity="0.55"/><rect x="1896" y="131" width="1" height="573" fill="#3c3c3c"/><rect x="1897" y="347" width="13" height="10" fill="#5c5a1e"/><rect x="1897" y="346" width="13" height="1.5" fill="#a0a0a0"/></svg>
<div class="a" style="left:535px;top:704px;width:1375px;height:1px;background:#454545;"></div>
<div class="t" style="left:555.5px;top:712.50px;font-size:11px;color:#969696;line-height:20px;height:20px;">问题</div>
<div class="t" style="left:600.5px;top:712.50px;font-size:11px;color:#969696;line-height:20px;height:20px;">输出</div>
<div class="t" style="left:647px;top:712.50px;font-size:11px;color:#969696;line-height:20px;height:20px;transform:scaleX(0.964);transform-origin:0 50%;">调试控制台</div>
<div class="t" style="left:724.2px;top:712.50px;font-size:11px;color:#e7e7e7;line-height:20px;height:20px;">终端</div>
<div class="a" style="left:722px;top:732.8px;width:26px;height:1.2px;background:#e7e7e7;"></div>
<svg style="left:1590px;top:705px" width="320" height="35" viewBox="1590 705 320 35">
<g fill="none" stroke="#c5c5c5" stroke-width="1.3">
 <path d="M1746.5 723 L1750.5 727.5 L1760 716.5"/>
 <path d="M1778.8 715.5 V729 M1772 722.3 H1785.5"/>
 <path d="M1791.5 721 L1795 724.5 L1798.5 721"/>
 <rect x="1812" y="716" width="13" height="13"/>
 <path d="M1818.5 716 V729"/>
 <path d="M1837 718.5 H1849 M1840.5 718.5 V716 H1845.5 V718.5 M1838.5 718.5 V729 H1847.5 V718.5 M1841.5 721 V726.5 M1844.5 721 V726.5"/>
 <path d="M1864 725.5 L1869.5 719.5 L1875 725.5"/>
 <path d="M1886.5 717 L1896 726.5 M1896 717 L1886.5 726.5"/>
</g>
<g fill="none" stroke="#c5c5c5" stroke-linecap="round"><path d="M1605.5 728.5 L1612 722" stroke-width="2.2"/><path d="M1613 721 L1616.5 717.5" stroke-width="1.4"/><path d="M1609 721 L1616.5 728.5" stroke-width="2.2"/><path d="M1609.5 718 A3 3 0 1 0 1606 721.5" stroke-width="1.5"/></g>
</svg>
<div class="t" style="left:1623px;top:712.30px;font-size:12.5px;color:#cccccc;line-height:20px;height:20px;transform:scaleX(0.841);transform-origin:0 50%;">Run RISCV-QEMU - Task</div>
<div class="t" style="left:555.5px;top:762.00px;line-height:20px;font-family:&quot;Liberation Mono&quot;,monospace;font-size:13.25px;color:#cccccc">CC -[M] <span style="letter-spacing:2.65px">正在构建</span>... beq.S</div>
<div class="t" style="left:555.5px;top:777.80px;line-height:20px;font-family:&quot;Liberation Mono&quot;,monospace;font-size:13.25px;color:#cccccc">CC -[M] <span style="letter-spacing:2.65px">正在构建</span>... jal.S</div>
<div class="t" style="left:555.5px;top:793.60px;line-height:20px;font-family:&quot;Liberation Mono&quot;,monospace;font-size:13.25px;color:#cccccc">CC -[M] <span style="letter-spacing:2.65px">正在构建</span>... main.c</div>
<div class="t" style="left:555.5px;top:809.40px;line-height:20px;font-family:&quot;Liberation Mono&quot;,monospace;font-size:13.25px;color:#cccccc">CC -[M] <span style="letter-spacing:2.65px">正在构建</span>... main.elf</div>
<div class="t" style="left:555.5px;top:825.20px;line-height:20px;font-family:&quot;Liberation Mono&quot;,monospace;font-size:13.25px;color:#cccccc">CC -[M] <span style="letter-spacing:2.65px">正在构建</span>... beq.o</div>
<div class="t" style="left:555.5px;top:841.00px;line-height:20px;font-family:&quot;Liberation Mono&quot;,monospace;font-size:13.25px;color:#cccccc">CC -[M] <span style="letter-spacing:2.65px">正在构建</span>... jal.o</div>
<div class="t" style="left:555.5px;top:856.80px;line-height:20px;font-family:&quot;Liberation Mono&quot;,monospace;font-size:13.25px;color:#cccccc">CC -[M] <span style="letter-spacing:2.65px">正在构建</span>... main.o</div>
<div class="t" style="left:555.5px;top:888.40px;line-height:20px;font-family:&quot;Liberation Mono&quot;,monospace;font-size:13.25px;font-weight:bold;color:#cccccc"><span style="letter-spacing:2.65px">终端将被任务重用，按任意键关闭。</span></div>
<div class="t" style="left:555.5px;top:920.00px;line-height:20px;font-family:&quot;Liberation Mono&quot;,monospace;font-size:13.25px;font-weight:bold;color:#cccccc">&gt; Executing task: echo Starting RISCV-QEMU&amp;qemu-riscv32 -g 1234 ./*.elf &lt;</div>
<div class="t" style="left:555.5px;top:951.60px;line-height:20px;font-family:&quot;Liberation Mono&quot;,monospace;font-size:13.25px;color:#cccccc">Starting RISCV-QEMU</div>
<div class="a" style="left:555.5px;top:969.4px;width:8px;height:16px;background:transparent;border:1px solid #cccccc"></div>
<svg style="left:10px;top:986px" width="1900" height="22" viewBox="10 986 1900 22">
<g fill="none" stroke="#ffffff" stroke-width="1.2">
 <path d="M22 995 L25.5 998.5 L22 1002 M31.5 991.5 L28 995 L31.5 998.5" stroke="#d8f0e8"/>
 <circle cx="58" cy="997.5" r="5.3"/>
 <path d="M55.8 995.3 L60.2 999.7 M60.2 995.3 L55.8 999.7"/>
 <path d="M84 991.5 L90 1002.5 H78 Z" stroke-linejoin="round"/>
 <path d="M84 995 V999 M84 1000.5 V1001.3"/>
 <path d="M159 993.5 L168 997.5 L159 1001.5"/>
 <rect x="154.5" y="998.5" width="4.5" height="4.5"/>
 <path d="M1515 1003 C1509.5 1001.5 1510.5 996 1513 993.5 C1513 996 1514 997 1515 997.5 C1515.5 995 1516.5 993 1518 992 C1518 995 1521 997 1520 1000.5 C1519.5 1002 1517.5 1003 1515 1003 Z"/>
 <circle cx="1856.5" cy="997" r="2.4"/>
 <path d="M1852.5 1003.2 C1853 1000.5 1860 1000.5 1860.5 1003.2"/>
 <path d="M1855.5 991.5 H1864 V996.5 H1861"/>
 <path d="M1882.5 1001.5 H1894.5 M1884.5 1001.5 V996.5 C1884.5 992 1889 991.5 1890 992 M1892.8 997 V1001.5 M1887 1003.5 H1890"/>
</g>
<circle cx="1891.8" cy="993.5" r="2.5" fill="#ffffff"/><g fill="none" stroke="#ffffff" stroke-linecap="round"><path d="M117.5 1003.5 L124 997" stroke-width="2.2"/><path d="M125 996 L128.5 992.5" stroke-width="1.4"/><path d="M121 996 L128.5 1003.5" stroke-width="2.2"/><path d="M121.5 993 A3 3 0 1 0 118 996.5" stroke-width="1.5"/></g>
</svg>
<div class="t" style="left:67px;top:987.50px;font-size:12.3px;color:#ffffff;line-height:20px;height:20px;transform:scaleX(1.023);transform-origin:0 50%;">0</div>
<div class="t" style="left:93.5px;top:987.50px;font-size:12.3px;color:#ffffff;line-height:20px;height:20px;transform:scaleX(1.023);transform-origin:0 50%;">0</div>
<div class="t" style="left:132.2px;top:987.50px;font-size:12.3px;color:#ffffff;line-height:20px;height:20px;transform:scaleX(1.023);transform-origin:0 50%;">1</div>
<div class="t" style="left:171.5px;top:987.50px;font-size:12.3px;color:#ffffff;line-height:20px;height:20px;transform:scaleX(0.983);transform-origin:0 50%;">(gdb) 启动 (17)</div>
<div class="t" style="left:1537px;top:987.50px;font-size:12.3px;color:#ffffff;line-height:20px;height:20px;transform:scaleX(0.963);transform-origin:0 50%;">行 26，列 1</div>
<div class="t" style="left:1613.5px;top:987.50px;font-size:12.3px;color:#ffffff;line-height:20px;height:20px;transform:scaleX(0.982);transform-origin:0 50%;">空格: 4</div>
<div class="t" style="left:1665.8px;top:987.50px;font-size:12.3px;color:#ffffff;line-height:20px;height:20px;transform:scaleX(0.976);transform-origin:0 50%;">UTF-8</div>
<div class="t" style="left:1714.3px;top:987.50px;font-size:12.3px;color:#ffffff;line-height:20px;height:20px;">LF</div>
<div class="t" style="left:1743.8px;top:987.50px;font-size:12.3px;color:#ffffff;line-height:20px;height:20px;transform:scaleX(0.947);transform-origin:0 50%;">RISC-V Assembly</div>
<div class="a" style="left:538px;top:224.5px;width:672px;height:24.5px;background:transparent;border:2.5px solid #e8234f"></div>
<div class="a" style="left:67px;top:415.5px;width:461px;height:40.5px;background:transparent;border:2.5px solid #e8234f"></div>
</body></html>
